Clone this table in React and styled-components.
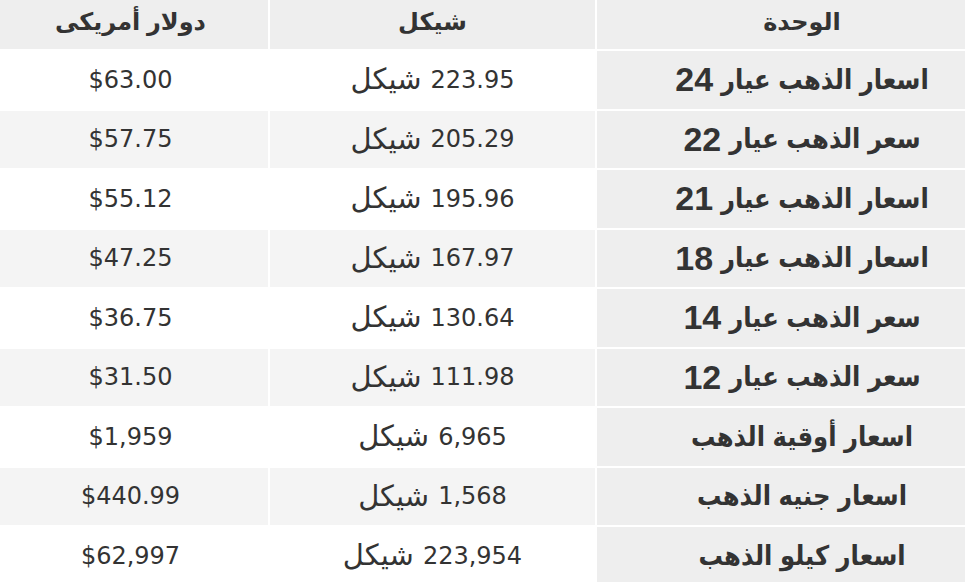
import React from "react";
import styled, { createGlobalStyle } from "styled-components";

const rows = [
  { unit: "اسعار الذهب عيار", karat: "24", ils: "223.95", usd: "$63.00" },
  { unit: "سعر الذهب عيار", karat: "22", ils: "205.29", usd: "$57.75" },
  { unit: "اسعار الذهب عيار", karat: "21", ils: "195.96", usd: "$55.12" },
  { unit: "اسعار الذهب عيار", karat: "18", ils: "167.97", usd: "$47.25" },
  { unit: "سعر الذهب عيار", karat: "14", ils: "130.64", usd: "$36.75" },
  { unit: "سعر الذهب عيار", karat: "12", ils: "111.98", usd: "$31.50" },
  { unit: "اسعار أوقية الذهب", ils: "6,965", usd: "$1,959" },
  { unit: "اسعار جنيه الذهب", ils: "1,568", usd: "$440.99" },
  { unit: "اسعار كيلو الذهب", ils: "223,954", usd: "$62,997" },
];

const GlobalStyle = createGlobalStyle`
  body {
    margin: 0;
    background: #fff;
    color: #333;
    overflow: hidden;
  }
`;

// the screenshot is a crop of a wider table: the unit column runs off the right edge
const Table = styled.div`
  direction: rtl;
  width: 1014px;
  margin-left: -7px;
  display: flex;
  flex-direction: column;
  gap: 2px;
  background: #fff;
`;

const Row = styled.div`
  display: grid;
  grid-template-columns: 410px 325px 1fr;
  gap: 2px;
  height: ${(p) => (p.$head ? "49px" : "57.5px")};
`;

const Cell = styled.div`
  display: flex;
  align-items: center;
  justify-content: center;
  background: ${(p) => (p.$shade ? "#eeeeee" : p.$stripe ? "#f4f4f4" : "#ffffff")};
  color: #333;
  white-space: nowrap;
`;

const HeadCell = styled(Cell)`
  font-family: "Liberation Sans", "DejaVu Sans", sans-serif;
  font-weight: bold;
  font-size: 24px;
  padding-bottom: 6px;
`;

const UnitCell = styled(Cell)`
  font-family: "Liberation Sans", "DejaVu Sans Condensed", "DejaVu Sans", sans-serif;
  font-weight: bold;
  font-size: 27px;
  gap: 8px;
`;

const Karat = styled.span`
  font-size: 34px;
`;

const ValueCell = styled(Cell)`
  font-family: "DejaVu Sans", "Liberation Sans", sans-serif;
  font-size: 24px;
  gap: 9px;
`;

const Currency = styled.span`
  font-size: 29px;
  line-height: 1;
`;

const Usd = styled.span`
  direction: ltr;
`;

export default function App() {
  return (
    <>
      <GlobalStyle />
      <Table>
        <Row $head>
          <HeadCell $shade>الوحدة</HeadCell>
          <HeadCell $shade>شيكل</HeadCell>
          <HeadCell $shade>دولار أمريكى</HeadCell>
        </Row>
        {rows.map((r, i) => (
          <Row key={i}>
            <UnitCell $shade>
              <span>{r.unit}</span>
              {r.karat && <Karat>{r.karat}</Karat>}
            </UnitCell>
            <ValueCell $stripe={i % 2 === 1}>
              <span>{r.ils}</span>
              <Currency>شيكل</Currency>
            </ValueCell>
            <ValueCell $stripe={i % 2 === 1}>
              <Usd>{r.usd}</Usd>
            </ValueCell>
          </Row>
        ))}
      </Table>
    </>
  );
}
